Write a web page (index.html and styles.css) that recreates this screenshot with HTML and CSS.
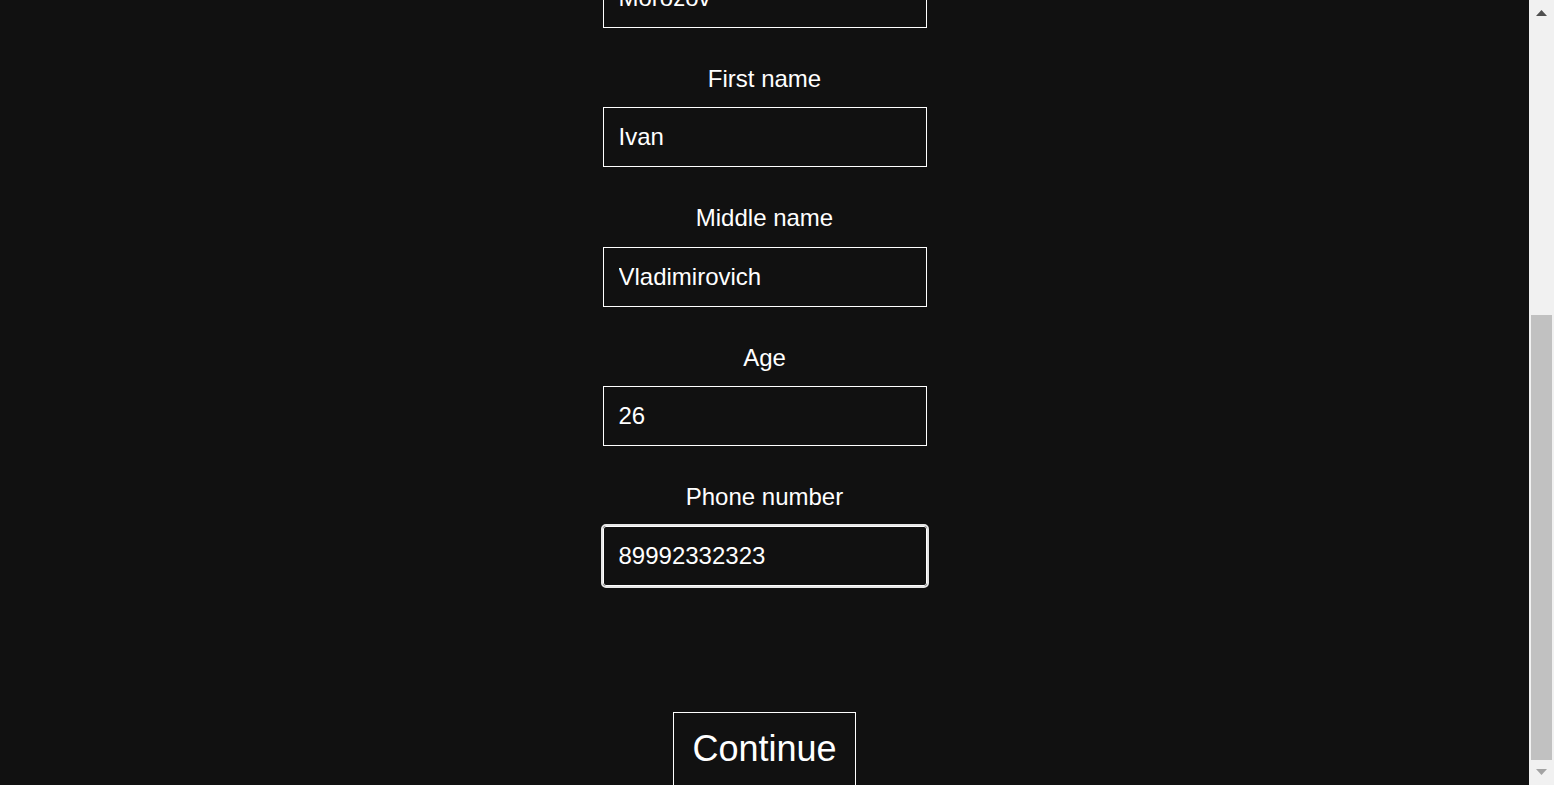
FILE: index.html
```html
<!DOCTYPE html>
<html lang="en">
<head>
<meta charset="utf-8">
<title>Personal data</title>
<link rel="stylesheet" href="styles.css">
</head>
<body>
<div class="page">
  <form class="form">
    <div class="field">
      <label class="label" for="last">Last name</label>
      <input class="input" id="last" type="text" value="Morozov">
    </div>
    <div class="field">
      <label class="label" for="first">First name</label>
      <input class="input" id="first" type="text" value="Ivan">
    </div>
    <div class="field">
      <label class="label" for="middle">Middle name</label>
      <input class="input" id="middle" type="text" value="Vladimirovich">
    </div>
    <div class="field">
      <label class="label" for="age">Age</label>
      <input class="input" id="age" type="text" value="26">
    </div>
    <div class="field field-last">
      <label class="label" for="phone">Phone number</label>
      <input class="input input-focused" id="phone" type="text" value="89992332323">
    </div>
    <button class="button" type="button">Continue</button>
  </form>
</div>
<div class="scrollbar">
  <div class="scroll-btn">
    <svg width="11" height="6" viewBox="0 0 11 6"><polygon points="5.5,0 11,6 0,6" fill="#505050"/></svg>
  </div>
  <div class="scroll-track">
    <div class="scroll-thumb"></div>
  </div>
  <div class="scroll-btn scroll-btn-down">
    <svg width="11" height="6" viewBox="0 0 11 6"><polygon points="0,0 11,0 5.5,6" fill="#a3a3a3"/></svg>
  </div>
</div>
</body>
</html>
```

FILE: styles.css
```css
html, body {
  margin: 0;
  padding: 0;
  height: 785px;
  overflow: hidden;
}

body {
  display: flex;
  background: #111111;
  color: #ffffff;
  font-family: "Liberation Sans", Arial, sans-serif;
}

.page {
  flex: 1;
  height: 785px;
  overflow: hidden;
}

.form {
  display: flex;
  flex-direction: column;
  align-items: center;
  margin: -75px 0 0 0;
}

.field {
  display: flex;
  flex-direction: column;
  align-items: center;
  margin-bottom: 37px;
}

.field-last {
  margin-bottom: 126px;
}

.label {
  font-size: 24px;
  line-height: 27.6px;
  margin-bottom: 15px;
}

.input {
  box-sizing: border-box;
  width: 324px;
  height: 60px;
  padding: 0 15px;
  border: 1px solid #ffffff;
  background: #111111;
  color: #ffffff;
  font-family: "Liberation Sans", Arial, sans-serif;
  font-size: 24px;
  outline: none;
  border-radius: 0;
}

.input-focused {
  border-radius: 3px;
  outline: 2px solid #e6e6e6;
  outline-offset: 0;
}

.button {
  box-sizing: border-box;
  width: 183px;
  padding: 15px 0 20px;
  border: 1px solid #ffffff;
  background: #111111;
  color: #ffffff;
  font-family: "Liberation Sans", Arial, sans-serif;
  font-size: 36px;
  line-height: normal;
  cursor: pointer;
}

.scrollbar {
  width: 25px;
  height: 785px;
  background: #f1f1f1;
  display: flex;
  flex-direction: column;
}

.scroll-btn {
  height: 25px;
  display: flex;
  justify-content: center;
  align-items: flex-start;
  padding-top: 10px;
  box-sizing: border-box;
}

.scroll-btn-down {
  padding-top: 9px;
}

.scroll-track {
  flex: 1;
  display: flex;
  flex-direction: column;
  justify-content: flex-end;
  padding: 0 2px;
}

.scroll-thumb {
  height: 445px;
  background: #c1c1c1;
}
```
